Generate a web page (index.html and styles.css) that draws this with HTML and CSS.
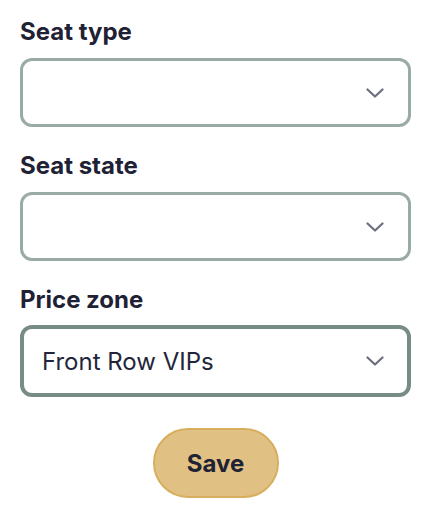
FILE: index.html
```
<!DOCTYPE html>
<html lang="en">

<head>
    <meta charset="UTF-8">
    <meta name="viewport" content="width=device-width, initial-scale=1.0">
    <title>Seat</title>
    <link rel="stylesheet" href="styles.css">
</head>

<body>
    <form class="seat-form" action="#">

        <div class="field">
            <label for="seat_type">Seat type</label>
            <div class="select">
                <span class="value"></span>
                <svg class="chevron" viewBox="0 0 18 10" width="18" height="10">
                    <path d="M1.5 1.5 L9 8.5 L16.5 1.5" />
                </svg>
            </div>
        </div>

        <div class="field">
            <label for="seat_state">Seat state</label>
            <div class="select">
                <span class="value"></span>
                <svg class="chevron" viewBox="0 0 18 10" width="18" height="10">
                    <path d="M1.5 1.5 L9 8.5 L16.5 1.5" />
                </svg>
            </div>
        </div>

        <div class="field">
            <label for="price_zone">Price zone</label>
            <div class="select focused">
                <span class="value">Front Row VIPs</span>
                <svg class="chevron" viewBox="0 0 18 10" width="18" height="10">
                    <path d="M1.5 1.5 L9 8.5 L16.5 1.5" />
                </svg>
            </div>
        </div>

        <div class="actions">
            <button class="save" type="button">Save</button>
        </div>

    </form>
</body>

</html>
```

FILE: styles.css
```
body {
    margin: 0;
    font-family: Inter, "Liberation Sans", sans-serif;
    color: #1f2235;
    background: #fff;
}

.seat-form {
    padding: 17px 25px 0 20px;
    display: flex;
    flex-direction: column;
    gap: 24px;
}

.field {
    display: flex;
    flex-direction: column;
}

.field label {
    font-size: 24px;
    font-weight: 700;
    line-height: 29px;
    margin-bottom: 12px;
}

.select {
    height: 69px;
    box-sizing: border-box;
    border: 3px solid #9aaba5;
    border-radius: 12px;
    display: flex;
    align-items: center;
    justify-content: space-between;
    padding: 0 24px 0 18px;
}

.select.focused {
    border: 4px solid #788c86;
    height: 72px;
    margin-top: -1px;
    padding-right: 23px;
}

.value {
    font-size: 24px;
    color: #23263a;
}

.chevron {
    fill: none;
    stroke: #6b6e7e;
    stroke-width: 2.2;
    stroke-linecap: round;
    stroke-linejoin: round;
}

.actions {
    display: flex;
    justify-content: center;
    padding-top: 7px;
}

.save {
    width: 126px;
    height: 70px;
    border: 2px solid #d7ae5d;
    border-radius: 35px;
    background: #e0c183;
    color: #1f2235;
    font-family: Inter, "Liberation Sans", sans-serif;
    font-size: 24px;
    font-weight: 700;
}
```
